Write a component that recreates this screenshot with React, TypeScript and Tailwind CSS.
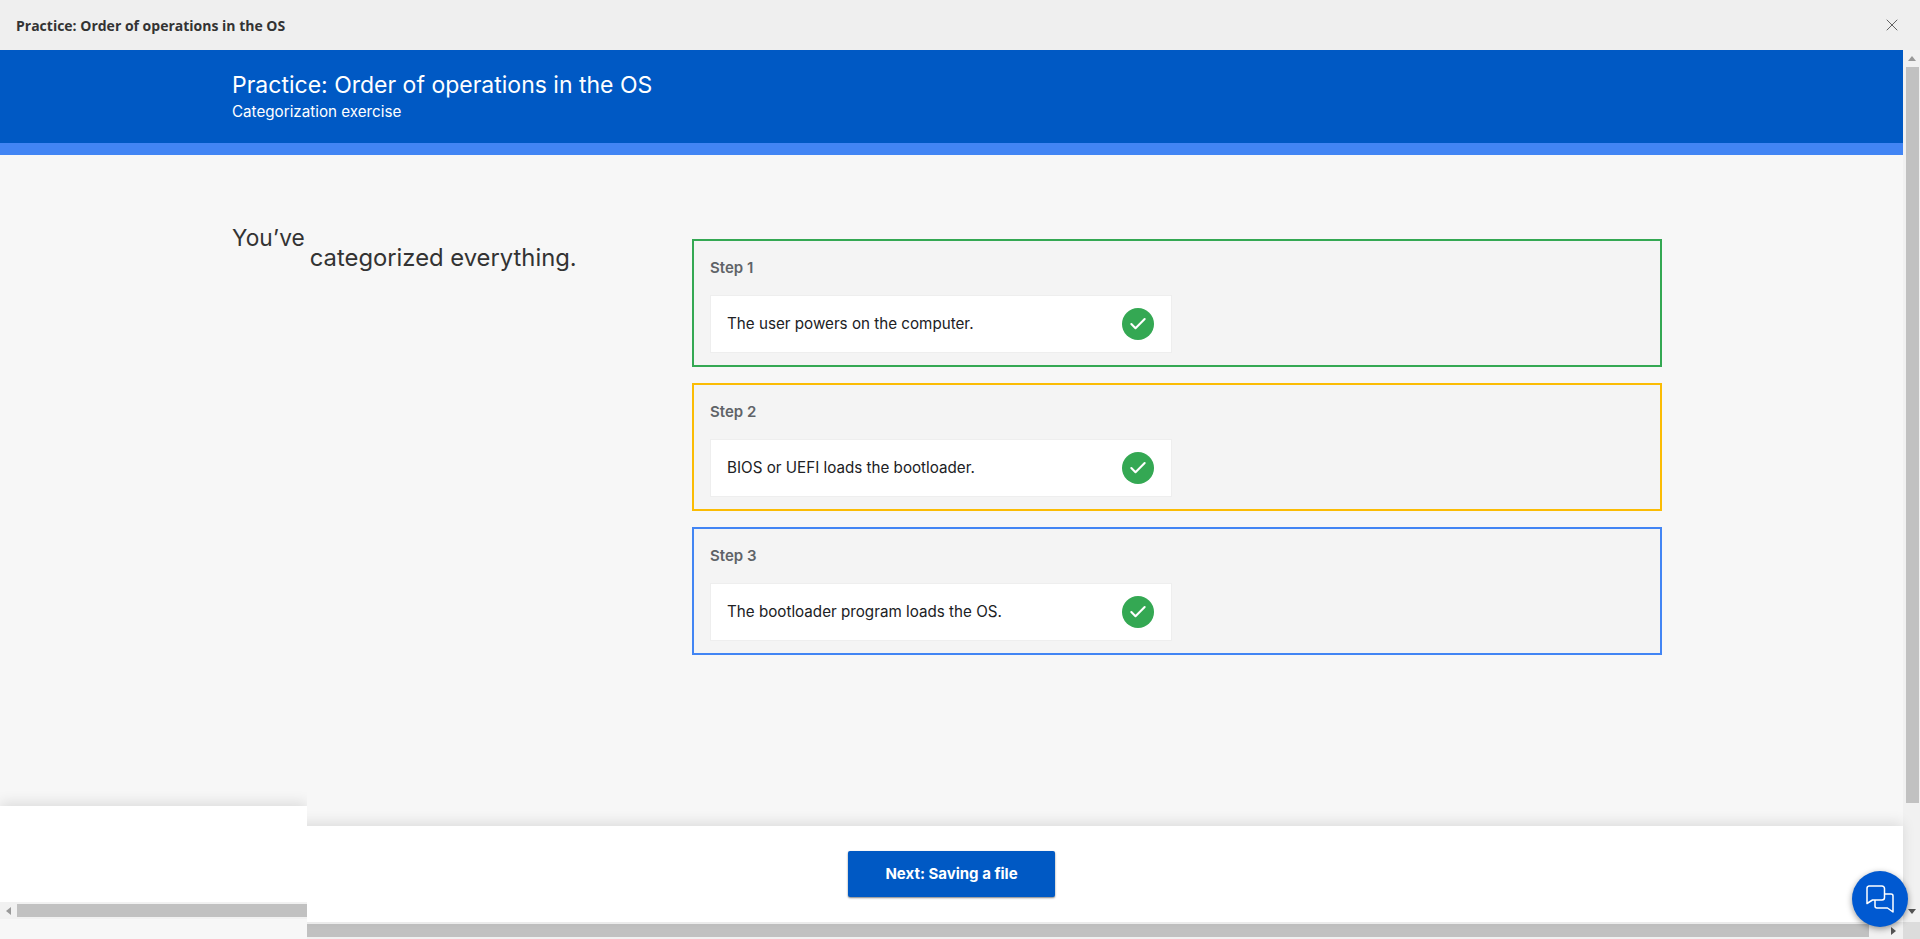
import { Check, X } from "lucide-react";

const steps = [
  { label: "Step 1", text: "The user powers on the computer.", border: "border-[#34a853]" },
  { label: "Step 2", text: "BIOS or UEFI loads the bootloader.", border: "border-[#fbbc04]" },
  { label: "Step 3", text: "The bootloader program loads the OS.", border: "border-[#4285f4]" },
];

const ChatIcon = () => (
  <svg width="28" height="28" viewBox="0 0 28 28" fill="none" stroke="white" strokeWidth="1.5" strokeLinejoin="round">
    <path d="M3 1h13a2.500 2.500 0 0 1 2.500 2.500v9a2.500 2.500 0 0 1-2.500 2.500H6.500L1 18.500V3.500A2.500 2.500 0 0 1 3 1z" />
    <path d="M18.500 9H25a2 2 0 0 1 2 2v16l-5.500-4H11a2 2 0 0 1-2-2v-6" />
  </svg>
);

const StepBox = ({ label, text, border }: { label: string; text: string; border: string }) => (
  <div className={`h-[128px] border-2 ${border} bg-[#f4f4f4] pl-4 pt-[13px]`}>
    <h3 className="h-[27px] text-[15px] font-semibold leading-[27px] text-[#5f6368]">{label}</h3>
    <div className="mt-[14px] flex h-[58px] w-[462px] items-center justify-between border border-[#eeeeee] bg-white pl-[16px] pr-[17px]">
      <span className="text-[15.2px] text-[#202124]">{text}</span>
      <span className="flex h-8 w-8 items-center justify-center rounded-full bg-[#34a853]">
        <Check size={20} strokeWidth={2.5} className="text-white" />
      </span>
    </div>
  </div>
);

export default function App() {
  return (
    <div className="relative flex h-[939px] w-[1920px] flex-col overflow-hidden bg-[#f7f7f7] font-['Inter',sans-serif]">
      <div className="flex h-[50px] items-center justify-between bg-[#efefef] pl-4 pr-[18px]">
        <span className="font-['Open_Sans',sans-serif] text-[14px] font-bold text-[#333333]">
          Practice: Order of operations in the OS
        </span>
        <X size={20} strokeWidth={1} className="text-[#444444]" />
      </div>

      <div className="flex h-[872px]">
        <div className="flex w-[1903px] flex-col">
          <div className="h-[105px] border-b-12 border-[#4285f4] bg-[#0059c4] pl-[232px] pt-[19px] text-white">
            <h1 className="text-[23px] leading-[32px]">Practice: Order of operations in the OS</h1>
            <p className="text-[15.2px] leading-[22px]">Categorization exercise</p>
          </div>

          <div className="flex flex-1 pl-[232px] pt-[84px]">
            <div className="-mt-[15px] flex h-0 w-[460px] items-start gap-[5px] text-[#333333]">
              <span className="text-[22.700px] leading-[28px]">You’ve</span>
              <span className="mt-5 text-[23.800px] leading-[28px]">categorized everything.</span>
            </div>
            <div className="flex w-[970px] flex-col gap-[16px]">
              {steps.map((s) => (
                <StepBox key={s.label} {...s} />
              ))}
            </div>
          </div>

          <div className="z-10 flex h-[96px] items-center justify-center bg-white shadow-[0_-4px_12px_rgba(0,0,0,0.1)]">
            <button className="h-[46px] w-[207px] rounded-[2px] bg-[#0059c4] text-[15px] font-bold text-white shadow-[0_1px_2px_rgba(0,0,0,0.5)]">
              Next: Saving a file
            </button>
          </div>
        </div>

        <div className="relative flex w-[17px] flex-col items-center bg-[#f1f1f1] pl-[1px]">
          <div className="mt-[6px] h-0 w-0 border-x-[4px] border-b-[5px] border-x-transparent border-b-[#999999]" />
          <div className="mt-[6px] h-[736px] w-[13px] bg-[#c1c1c1]" />
          <div className="mt-[106px] h-0 w-0 border-x-[4px] border-t-[5px] border-x-transparent border-t-[#555555]" />
        </div>
      </div>

      {/* bottom scrollbar */}
      <div className="flex h-[17px] bg-[#f1f1f1]">
        <div className="ml-[307px] mt-[2px] h-[13px] w-[1562px] bg-[#c1c1c1]" />
        <div className="ml-[22px] mt-[5px] h-0 w-0 border-y-[4px] border-l-[5px] border-y-transparent border-l-[#555555]" />
        <div className="ml-[7px] h-[17px] w-[17px] bg-[#dcdcdc]" />
      </div>

      {/* leftover frame over the bottom left corner */}
      <div className="absolute bottom-0 left-0 z-20 h-[149px] w-[307px] overflow-hidden bg-[#f7f7f7] pt-[16px]">
        <div className="h-[96px] bg-white shadow-[0_-4px_12px_rgba(0,0,0,0.1)]" />
        <div className="flex h-[17px] items-center bg-[#f1f1f1]">
          <div className="ml-[6px] h-0 w-0 border-y-[4px] border-r-[5px] border-y-transparent border-r-[#999999]" />
          <div className="ml-[6px] h-[13px] flex-1 bg-[#c1c1c1]" />
        </div>
      </div>

      <button className="absolute bottom-[12px] right-[12px] z-30 flex h-14 w-14 items-center justify-center rounded-full bg-[#0059d1] shadow-[0_2px_6px_rgba(0,0,0,0.4)]">
        <ChatIcon />
      </button>
    </div>
  );
}
